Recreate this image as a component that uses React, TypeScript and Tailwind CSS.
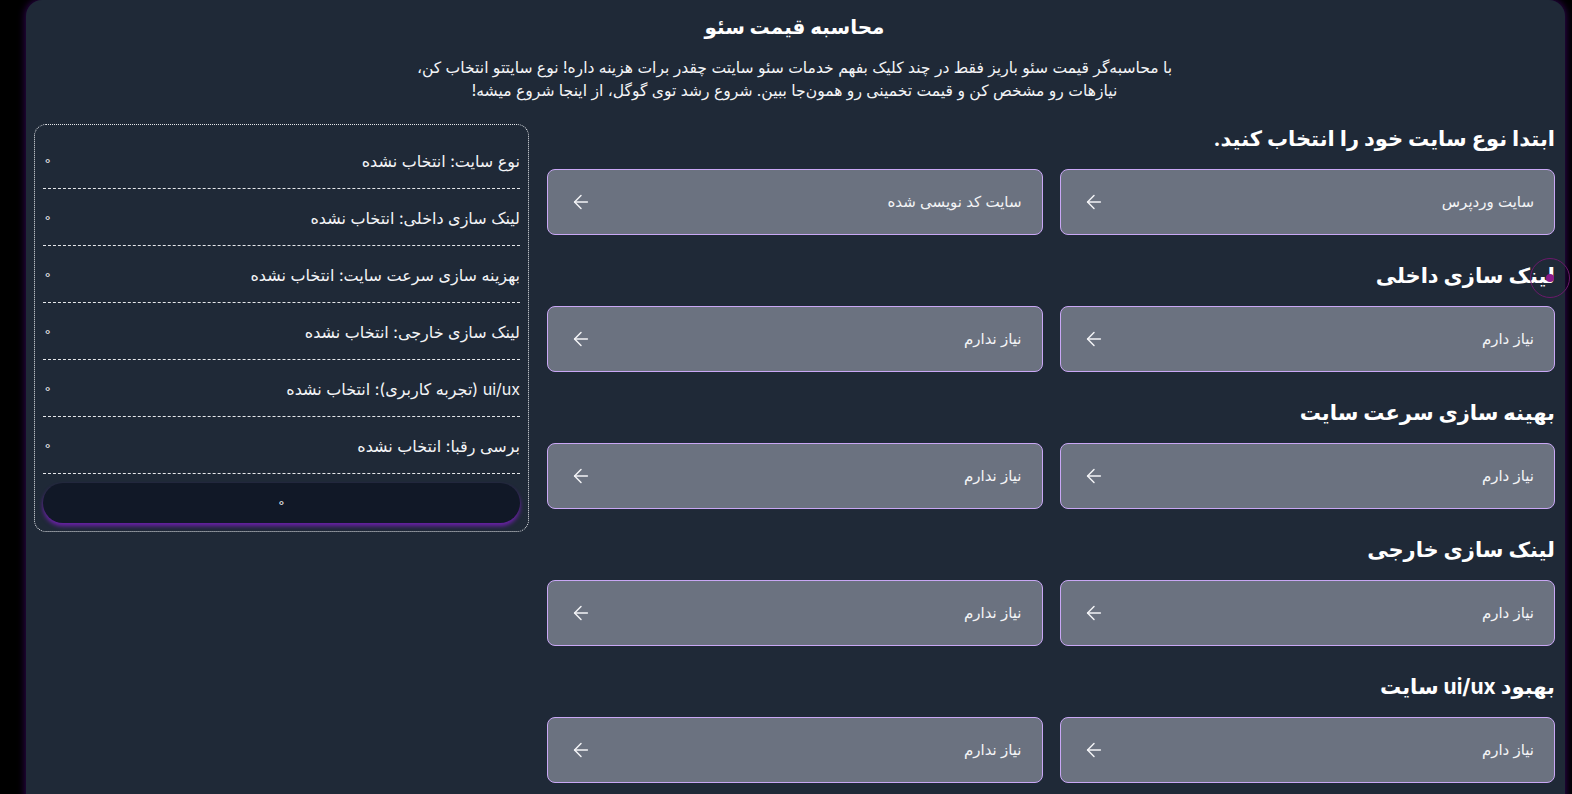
import { ArrowLeft } from "lucide-react";

const sections = [
  { title: "ابتدا نوع سایت خود را انتخاب کنید.", options: ["سایت وردپرس", "سایت کد نویسی شده"] },
  { title: "لینک سازی داخلی", options: ["نیاز دارم", "نیاز ندارم"] },
  { title: "بهینه سازی سرعت سایت", options: ["نیاز دارم", "نیاز ندارم"] },
  { title: "لینک سازی خارجی", options: ["نیاز دارم", "نیاز ندارم"] },
  { title: "بهبود ui/ux سایت", options: ["نیاز دارم", "نیاز ندارم"] },
];

const summary = [
  "نوع سایت: انتخاب نشده",
  "لینک سازی داخلی: انتخاب نشده",
  "بهزینه سازی سرعت سایت: انتخاب نشده",
  "لینک سازی خارجی: انتخاب نشده",
  "ui/ux (تجربه کاربری): انتخاب نشده",
  "برسی رقبا: انتخاب نشده",
];

const App = () => {
  return (
    <div
      dir="rtl"
      className="relative h-[794px] overflow-hidden bg-black pl-[26px] pr-[7px]"
      style={{ fontFamily: '"Inter", "DejaVu Sans", sans-serif' }}
    >
      <div className="rounded-t-2xl bg-[#1f2937] pl-[8px] pr-[10px] pb-10 shadow-[0_0_8px_#3b0764]">
        <h1 className="pt-[9px] text-center text-[20px] font-bold leading-9 text-white">محاسبه قیمت سئو</h1>
        <p className="mx-auto mt-[11px] max-w-[820px] text-center text-[15.6px] leading-[23px] text-gray-100">
          با محاسبه‌گر قیمت سئو باریز فقط در چند کلیک بفهم خدمات سئو سایتت چقدر برات هزینه داره! نوع سایتتو انتخاب کن،
          <br />
          نیازهات رو مشخص کن و قیمت تخمینی رو همون‌جا ببین. شروع رشد توی گوگل، از اینجا شروع میشه!
        </p>

        <div className="mt-[22px] flex items-start gap-[18px]">
          {/* options */}
          <div className="flex-1">
            {sections.map((section) => (
              <div key={section.title} className="mb-[26px]">
                <h2 className="mb-[15px] h-[30px] text-[21px] font-bold leading-[30px] text-white">{section.title}</h2>
                <div className="grid grid-cols-2 gap-[17px]">
                  {section.options.map((opt) => (
                    <button
                      key={opt}
                      className="flex h-[66px] items-center justify-between rounded-lg border border-[#c9a7f5] bg-[#6b7280] pl-[22px] pr-[20px] text-[15px] text-gray-100"
                    >
                      <span>{opt}</span>
                      <ArrowLeft className="h-[22px] w-[22px]" strokeWidth={1.6} />
                    </button>
                  ))}
                </div>
              </div>
            ))}
          </div>

          {/* summary */}
          <div className="w-[495px] flex-shrink-0 rounded-xl border border-dotted border-gray-200 px-[8px] pb-[8px] pt-[7px]">
            {summary.map((item) => (
              <div
                key={item}
                className="flex h-[57px] items-center justify-between border-b border-dashed border-gray-200 pt-[2px] text-[16px] text-gray-100"
              >
                <span>{item}</span>
                <span className="pl-[1px] text-[13px]">◦</span>
              </div>
            ))}
            <button className="mt-[9px] flex h-[40px] w-full items-center justify-center rounded-full bg-[#111827] text-[13px] text-gray-100 shadow-[0_3px_4px_#6b21a8]">
              ◦
            </button>
          </div>
        </div>
      </div>

      {/* cursor marker */}
      <div className="absolute left-[1530px] top-[258px] h-[40px] w-[40px] rounded-full border border-[#6b1a6b]" />
      <div className="absolute left-[1546px] top-[274px] h-[8px] w-[8px] rounded-full bg-[#8b1a8b]" />
    </div>
  );
};

export default App;
